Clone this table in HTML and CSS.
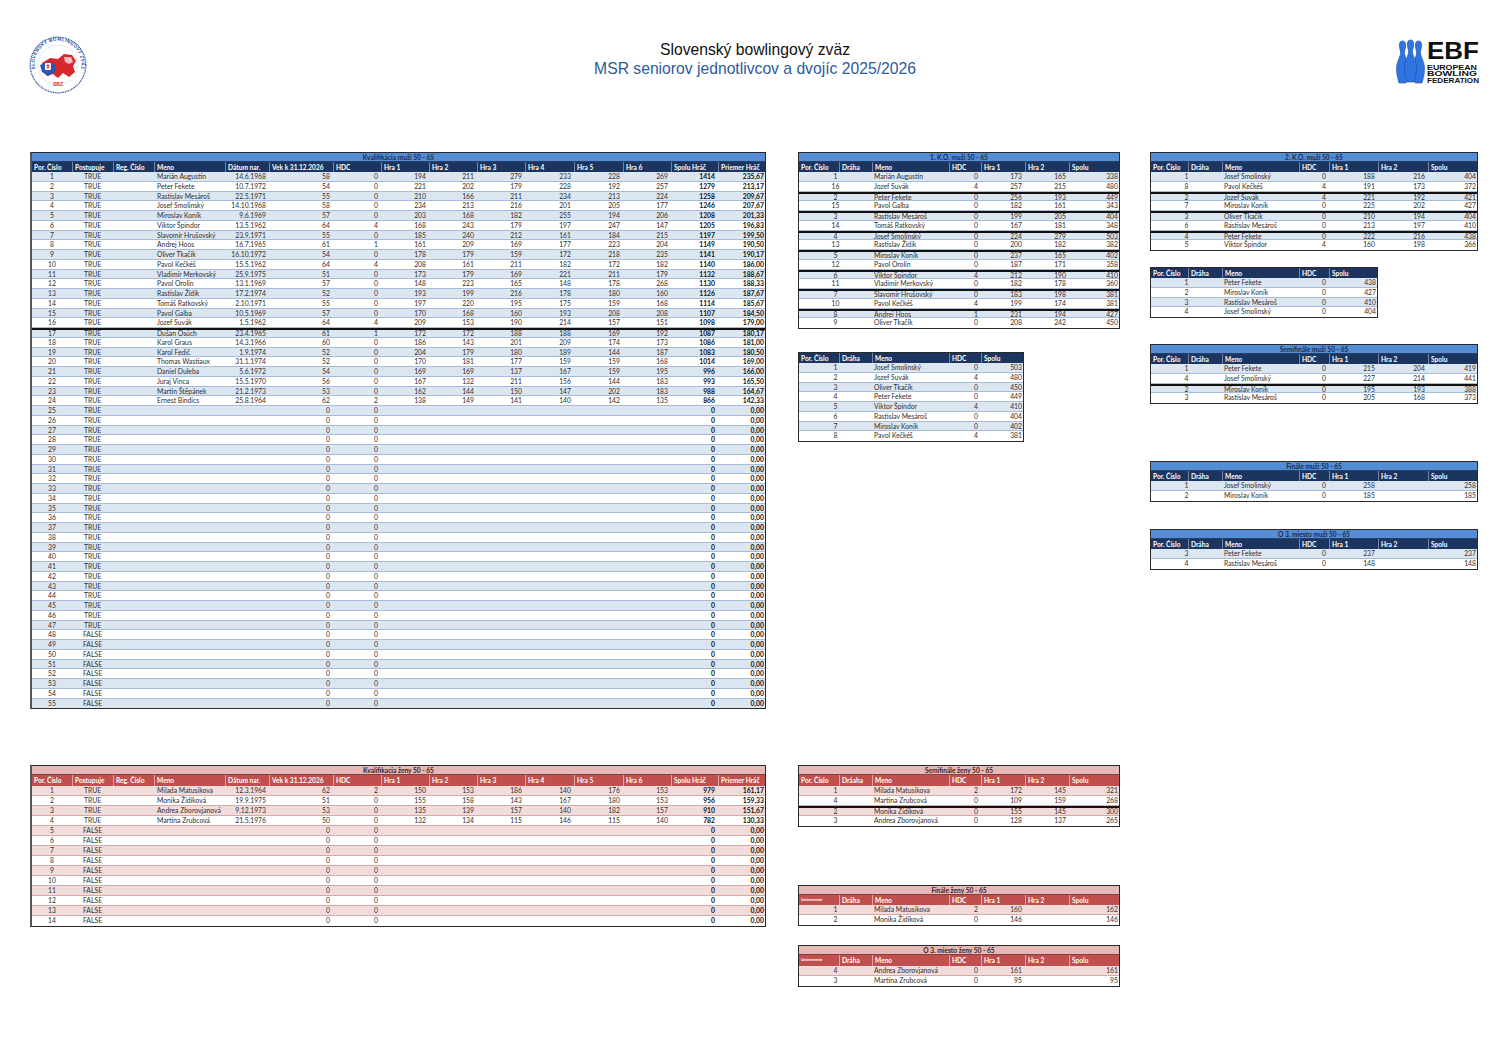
FILE: index.html
```html
<!DOCTYPE html>
<html lang="sk">
<head>
<meta charset="utf-8">
<title>MSR seniorov jednotlivcov a dvojíc 2025/2026</title>
<link rel="stylesheet" href="styles.css">
</head>
<body>
<div class="page">
  <header class="top">
    <svg class="logo-sbz" viewBox="0 0 58 58" width="58" height="58">
      <defs><path id="arc" d="M 6 33 A 23.5 23.5 0 1 1 52 33"/></defs>
      <circle cx="29" cy="29" r="27.8" fill="#fff" stroke="#2d4a9b" stroke-width="1.3" stroke-dasharray="1 0.7"/>
      <circle cx="29" cy="29" r="20" fill="none" stroke="#c9d2ea" stroke-width="0.5"/>
      <text class="arc-text"><textPath href="#arc" startOffset="50%" text-anchor="middle">SLOVENSKÝ BOWLINGOVÝ ZVÄZ</textPath></text>
      <path d="M13 27 L21 22 L29 23 L35 18 L43 19 L47 25 L44 30 L46 36 L40 41 L34 37 L29 42 L24 38 L18 40 L14 35 Z" fill="#d8282e"/>
      <path d="M11 29 L20 26 L27 29 L26 36 L19 40 L13 36 Z" fill="#2a58b0"/>
      <path d="M35 21 L42 21 L44 26 L40 28 L36 26 Z" fill="#fff" opacity=".7"/>
      <rect x="16" y="27" width="6" height="7" rx="1" fill="#fff"/>
      <path d="M19 28 V33 M17.3 29.6 H20.7 M17.8 31.2 H20.2" stroke="#d8282e" stroke-width="0.9"/>
      <text x="29" y="50" class="sbz-red" text-anchor="middle">SBZ</text>
    </svg>
    <div class="titles">
      <div class="t1">Slovenský bowlingový zväz</div>
      <div class="t2">MSR seniorov jednotlivcov a dvojíc 2025/2026</div>
    </div>
    <svg class="logo-ebf" viewBox="0 0 84 45" width="84" height="45">
      <g fill="#2f74e0" stroke="#1b4fa0" stroke-width="0.6">
        <path transform="translate(6.5 2)" d="M0,0 C3,0 3.5,3 3,6 C2.6,8.5 2,10 2,12 C2,16 6,20 6,28 C6,34 4.5,38 3.5,42 L-3.5,42 C-4.5,38 -6,34 -6,28 C-6,20 -2,16 -2,12 C-2,10 -2.6,8.5 -3,6 C-3.5,3 -3,0 0,0 Z"/>
        <path transform="translate(22.5 2)" d="M0,0 C3,0 3.5,3 3,6 C2.6,8.5 2,10 2,12 C2,16 6,20 6,28 C6,34 4.5,38 3.5,42 L-3.5,42 C-4.5,38 -6,34 -6,28 C-6,20 -2,16 -2,12 C-2,10 -2.6,8.5 -3,6 C-3.5,3 -3,0 0,0 Z"/>
        <path transform="translate(14.5 1)" d="M0,0 C3,0 3.5,3 3,6 C2.6,8.5 2,10 2,12 C2,16 6,20 6,28 C6,34 4.5,38 3.5,42 L-3.5,42 C-4.5,38 -6,34 -6,28 C-6,20 -2,16 -2,12 C-2,10 -2.6,8.5 -3,6 C-3.5,3 -3,0 0,0 Z"/>
      </g>
      <text x="31" y="20" class="ebf-big" textLength="52" lengthAdjust="spacingAndGlyphs">EBF</text>
      <text x="31" y="31" class="ebf-small" textLength="50" lengthAdjust="spacingAndGlyphs">EUROPEAN</text>
      <text x="31" y="37.3" class="ebf-small" textLength="50" lengthAdjust="spacingAndGlyphs">BOWLING</text>
      <text x="31" y="43.6" class="ebf-small" textLength="52" lengthAdjust="spacingAndGlyphs">FEDERATION</text>
    </svg>
  </header>

  <section class="men">
    <div class="col col-a">
      <div class="tbl q">
        <div class="cap">Kvalifikácia muži 50 - 65</div>
        <div class="hd"><span>Por. Číslo</span><span>Postupuje</span><span>Reg. Číslo</span><span>Meno</span><span>Dátum nar.</span><span>Vek k 31.12.2026</span><span>HDC</span><span>Hra 1</span><span>Hra 2</span><span>Hra 3</span><span>Hra 4</span><span>Hra 5</span><span>Hra 6</span><span>Spolu Hráč</span><span>Priemer Hráč</span></div>
        <div class="bd">
          <div class="r"><span>1</span><span>TRUE</span><span></span><span>Marián Augustín</span><span>14.6.1968</span><span>58</span><span>0</span><span>194</span><span>211</span><span>279</span><span>233</span><span>228</span><span>269</span><span>1414</span><span>235,67</span></div>
          <div class="r"><span>2</span><span>TRUE</span><span></span><span>Peter Fekete</span><span>10.7.1972</span><span>54</span><span>0</span><span>221</span><span>202</span><span>179</span><span>228</span><span>192</span><span>257</span><span>1279</span><span>213,17</span></div>
          <div class="r"><span>3</span><span>TRUE</span><span></span><span>Rastislav Mesároš</span><span>22.5.1971</span><span>55</span><span>0</span><span>210</span><span>166</span><span>211</span><span>234</span><span>213</span><span>224</span><span>1258</span><span>209,67</span></div>
          <div class="r"><span>4</span><span>TRUE</span><span></span><span>Josef Smolinský</span><span>14.10.1968</span><span>58</span><span>0</span><span>234</span><span>213</span><span>216</span><span>201</span><span>205</span><span>177</span><span>1246</span><span>207,67</span></div>
          <div class="r"><span>5</span><span>TRUE</span><span></span><span>Miroslav Koník</span><span>9.6.1969</span><span>57</span><span>0</span><span>203</span><span>168</span><span>182</span><span>255</span><span>194</span><span>206</span><span>1208</span><span>201,33</span></div>
          <div class="r"><span>6</span><span>TRUE</span><span></span><span>Viktor Špindor</span><span>13.5.1962</span><span>64</span><span>4</span><span>168</span><span>243</span><span>179</span><span>197</span><span>247</span><span>147</span><span>1205</span><span>196,83</span></div>
          <div class="r"><span>7</span><span>TRUE</span><span></span><span>Slavomír Hrušovský</span><span>23.9.1971</span><span>55</span><span>0</span><span>185</span><span>240</span><span>212</span><span>161</span><span>184</span><span>215</span><span>1197</span><span>199,50</span></div>
          <div class="r"><span>8</span><span>TRUE</span><span></span><span>Andrej Hoos</span><span>16.7.1965</span><span>61</span><span>1</span><span>161</span><span>209</span><span>169</span><span>177</span><span>223</span><span>204</span><span>1149</span><span>190,50</span></div>
          <div class="r"><span>9</span><span>TRUE</span><span></span><span>Oliver Tkačík</span><span>16.10.1972</span><span>54</span><span>0</span><span>178</span><span>179</span><span>159</span><span>172</span><span>218</span><span>235</span><span>1141</span><span>190,17</span></div>
          <div class="r"><span>10</span><span>TRUE</span><span></span><span>Pavol Kečkéš</span><span>15.5.1962</span><span>64</span><span>4</span><span>208</span><span>161</span><span>211</span><span>182</span><span>172</span><span>182</span><span>1140</span><span>186,00</span></div>
          <div class="r"><span>11</span><span>TRUE</span><span></span><span>Vladimír Merkovský</span><span>25.9.1975</span><span>51</span><span>0</span><span>173</span><span>179</span><span>169</span><span>221</span><span>211</span><span>179</span><span>1132</span><span>188,67</span></div>
          <div class="r"><span>12</span><span>TRUE</span><span></span><span>Pavol Orolín</span><span>13.1.1969</span><span>57</span><span>0</span><span>148</span><span>223</span><span>165</span><span>148</span><span>178</span><span>268</span><span>1130</span><span>188,33</span></div>
          <div class="r"><span>13</span><span>TRUE</span><span></span><span>Rastislav Žídik</span><span>17.2.1974</span><span>52</span><span>0</span><span>193</span><span>199</span><span>216</span><span>178</span><span>180</span><span>160</span><span>1126</span><span>187,67</span></div>
          <div class="r"><span>14</span><span>TRUE</span><span></span><span>Tomáš Ratkovský</span><span>2.10.1971</span><span>55</span><span>0</span><span>197</span><span>220</span><span>195</span><span>175</span><span>159</span><span>168</span><span>1114</span><span>185,67</span></div>
          <div class="r"><span>15</span><span>TRUE</span><span></span><span>Pavol Galba</span><span>10.5.1969</span><span>57</span><span>0</span><span>170</span><span>168</span><span>160</span><span>193</span><span>208</span><span>208</span><span>1107</span><span>184,50</span></div>
          <div class="r"><span>16</span><span>TRUE</span><span></span><span>Jozef Suvák</span><span>1.5.1962</span><span>64</span><span>4</span><span>209</span><span>153</span><span>190</span><span>214</span><span>157</span><span>151</span><span>1098</span><span>179,00</span></div>
          <div class="r sep"><span>17</span><span>TRUE</span><span></span><span>Dušan Osúch</span><span>23.4.1965</span><span>61</span><span>1</span><span>172</span><span>172</span><span>188</span><span>188</span><span>169</span><span>192</span><span>1087</span><span>180,17</span></div>
          <div class="r"><span>18</span><span>TRUE</span><span></span><span>Karol Graus</span><span>14.3.1966</span><span>60</span><span>0</span><span>186</span><span>143</span><span>201</span><span>209</span><span>174</span><span>173</span><span>1086</span><span>181,00</span></div>
          <div class="r"><span>19</span><span>TRUE</span><span></span><span>Karol Fedič</span><span>1.9.1974</span><span>52</span><span>0</span><span>204</span><span>179</span><span>180</span><span>189</span><span>144</span><span>187</span><span>1083</span><span>180,50</span></div>
          <div class="r"><span>20</span><span>TRUE</span><span></span><span>Thomas Wastiaux</span><span>31.1.1974</span><span>52</span><span>0</span><span>170</span><span>181</span><span>177</span><span>159</span><span>159</span><span>168</span><span>1014</span><span>169,00</span></div>
          <div class="r"><span>21</span><span>TRUE</span><span></span><span>Daniel Duleba</span><span>5.6.1972</span><span>54</span><span>0</span><span>169</span><span>169</span><span>137</span><span>167</span><span>159</span><span>195</span><span>996</span><span>166,00</span></div>
          <div class="r"><span>22</span><span>TRUE</span><span></span><span>Juraj Vinca</span><span>15.5.1970</span><span>56</span><span>0</span><span>167</span><span>132</span><span>211</span><span>156</span><span>144</span><span>183</span><span>993</span><span>165,50</span></div>
          <div class="r"><span>23</span><span>TRUE</span><span></span><span>Martin Štěpánek</span><span>21.2.1973</span><span>53</span><span>0</span><span>162</span><span>144</span><span>150</span><span>147</span><span>202</span><span>183</span><span>988</span><span>164,67</span></div>
          <div class="r"><span>24</span><span>TRUE</span><span></span><span>Ernest Bindics</span><span>25.8.1964</span><span>62</span><span>2</span><span>138</span><span>149</span><span>141</span><span>140</span><span>142</span><span>135</span><span>866</span><span>142,33</span></div>
          <div class="r"><span>25</span><span>TRUE</span><span></span><span></span><span></span><span>0</span><span>0</span><span></span><span></span><span></span><span></span><span></span><span></span><span>0</span><span>0,00</span></div>
          <div class="r"><span>26</span><span>TRUE</span><span></span><span></span><span></span><span>0</span><span>0</span><span></span><span></span><span></span><span></span><span></span><span></span><span>0</span><span>0,00</span></div>
          <div class="r"><span>27</span><span>TRUE</span><span></span><span></span><span></span><span>0</span><span>0</span><span></span><span></span><span></span><span></span><span></span><span></span><span>0</span><span>0,00</span></div>
          <div class="r"><span>28</span><span>TRUE</span><span></span><span></span><span></span><span>0</span><span>0</span><span></span><span></span><span></span><span></span><span></span><span></span><span>0</span><span>0,00</span></div>
          <div class="r"><span>29</span><span>TRUE</span><span></span><span></span><span></span><span>0</span><span>0</span><span></span><span></span><span></span><span></span><span></span><span></span><span>0</span><span>0,00</span></div>
          <div class="r"><span>30</span><span>TRUE</span><span></span><span></span><span></span><span>0</span><span>0</span><span></span><span></span><span></span><span></span><span></span><span></span><span>0</span><span>0,00</span></div>
          <div class="r"><span>31</span><span>TRUE</span><span></span><span></span><span></span><span>0</span><span>0</span><span></span><span></span><span></span><span></span><span></span><span></span><span>0</span><span>0,00</span></div>
          <div class="r"><span>32</span><span>TRUE</span><span></span><span></span><span></span><span>0</span><span>0</span><span></span><span></span><span></span><span></span><span></span><span></span><span>0</span><span>0,00</span></div>
          <div class="r"><span>33</span><span>TRUE</span><span></span><span></span><span></span><span>0</span><span>0</span><span></span><span></span><span></span><span></span><span></span><span></span><span>0</span><span>0,00</span></div>
          <div class="r"><span>34</span><span>TRUE</span><span></span><span></span><span></span><span>0</span><span>0</span><span></span><span></span><span></span><span></span><span></span><span></span><span>0</span><span>0,00</span></div>
          <div class="r"><span>35</span><span>TRUE</span><span></span><span></span><span></span><span>0</span><span>0</span><span></span><span></span><span></span><span></span><span></span><span></span><span>0</span><span>0,00</span></div>
          <div class="r"><span>36</span><span>TRUE</span><span></span><span></span><span></span><span>0</span><span>0</span><span></span><span></span><span></span><span></span><span></span><span></span><span>0</span><span>0,00</span></div>
          <div class="r"><span>37</span><span>TRUE</span><span></span><span></span><span></span><span>0</span><span>0</span><span></span><span></span><span></span><span></span><span></span><span></span><span>0</span><span>0,00</span></div>
          <div class="r"><span>38</span><span>TRUE</span><span></span><span></span><span></span><span>0</span><span>0</span><span></span><span></span><span></span><span></span><span></span><span></span><span>0</span><span>0,00</span></div>
          <div class="r"><span>39</span><span>TRUE</span><span></span><span></span><span></span><span>0</span><span>0</span><span></span><span></span><span></span><span></span><span></span><span></span><span>0</span><span>0,00</span></div>
          <div class="r"><span>40</span><span>TRUE</span><span></span><span></span><span></span><span>0</span><span>0</span><span></span><span></span><span></span><span></span><span></span><span></span><span>0</span><span>0,00</span></div>
          <div class="r"><span>41</span><span>TRUE</span><span></span><span></span><span></span><span>0</span><span>0</span><span></span><span></span><span></span><span></span><span></span><span></span><span>0</span><span>0,00</span></div>
          <div class="r"><span>42</span><span>TRUE</span><span></span><span></span><span></span><span>0</span><span>0</span><span></span><span></span><span></span><span></span><span></span><span></span><span>0</span><span>0,00</span></div>
          <div class="r"><span>43</span><span>TRUE</span><span></span><span></span><span></span><span>0</span><span>0</span><span></span><span></span><span></span><span></span><span></span><span></span><span>0</span><span>0,00</span></div>
          <div class="r"><span>44</span><span>TRUE</span><span></span><span></span><span></span><span>0</span><span>0</span><span></span><span></span><span></span><span></span><span></span><span></span><span>0</span><span>0,00</span></div>
          <div class="r"><span>45</span><span>TRUE</span><span></span><span></span><span></span><span>0</span><span>0</span><span></span><span></span><span></span><span></span><span></span><span></span><span>0</span><span>0,00</span></div>
          <div class="r"><span>46</span><span>TRUE</span><span></span><span></span><span></span><span>0</span><span>0</span><span></span><span></span><span></span><span></span><span></span><span></span><span>0</span><span>0,00</span></div>
          <div class="r"><span>47</span><span>TRUE</span><span></span><span></span><span></span><span>0</span><span>0</span><span></span><span></span><span></span><span></span><span></span><span></span><span>0</span><span>0,00</span></div>
          <div class="r"><span>48</span><span>FALSE</span><span></span><span></span><span></span><span>0</span><span>0</span><span></span><span></span><span></span><span></span><span></span><span></span><span>0</span><span>0,00</span></div>
          <div class="r"><span>49</span><span>FALSE</span><span></span><span></span><span></span><span>0</span><span>0</span><span></span><span></span><span></span><span></span><span></span><span></span><span>0</span><span>0,00</span></div>
          <div class="r"><span>50</span><span>FALSE</span><span></span><span></span><span></span><span>0</span><span>0</span><span></span><span></span><span></span><span></span><span></span><span></span><span>0</span><span>0,00</span></div>
          <div class="r"><span>51</span><span>FALSE</span><span></span><span></span><span></span><span>0</span><span>0</span><span></span><span></span><span></span><span></span><span></span><span></span><span>0</span><span>0,00</span></div>
          <div class="r"><span>52</span><span>FALSE</span><span></span><span></span><span></span><span>0</span><span>0</span><span></span><span></span><span></span><span></span><span></span><span></span><span>0</span><span>0,00</span></div>
          <div class="r"><span>53</span><span>FALSE</span><span></span><span></span><span></span><span>0</span><span>0</span><span></span><span></span><span></span><span></span><span></span><span></span><span>0</span><span>0,00</span></div>
          <div class="r"><span>54</span><span>FALSE</span><span></span><span></span><span></span><span>0</span><span>0</span><span></span><span></span><span></span><span></span><span></span><span></span><span>0</span><span>0,00</span></div>
          <div class="r"><span>55</span><span>FALSE</span><span></span><span></span><span></span><span>0</span><span>0</span><span></span><span></span><span></span><span></span><span></span><span></span><span>0</span><span>0,00</span></div>
        </div>
      </div>
    </div>

    <div class="col col-b">
      <div class="tbl ka">
        <div class="cap">1. K.O. muži 50 - 65</div>
        <div class="hd"><span>Por. Číslo</span><span>Dráha</span><span>Meno</span><span>HDC</span><span>Hra 1</span><span>Hra 2</span><span>Spolu</span></div>
        <div class="bd">
          <div class="r"><span>1</span><span>Marián Augustín</span><span>0</span><span>173</span><span>165</span><span>338</span></div>
          <div class="r"><span>16</span><span>Jozef Suvák</span><span>4</span><span>257</span><span>215</span><span>480</span></div>
          <div class="r sep"><span>2</span><span>Peter Fekete</span><span>0</span><span>256</span><span>193</span><span>449</span></div>
          <div class="r"><span>15</span><span>Pavol Galba</span><span>0</span><span>182</span><span>161</span><span>343</span></div>
          <div class="r sep"><span>3</span><span>Rastislav Mesároš</span><span>0</span><span>199</span><span>205</span><span>404</span></div>
          <div class="r"><span>14</span><span>Tomáš Ratkovský</span><span>0</span><span>167</span><span>181</span><span>348</span></div>
          <div class="r sep"><span>4</span><span>Josef Smolinský</span><span>0</span><span>224</span><span>279</span><span>503</span></div>
          <div class="r"><span>13</span><span>Rastislav Žídik</span><span>0</span><span>200</span><span>182</span><span>382</span></div>
          <div class="r sep"><span>5</span><span>Miroslav Koník</span><span>0</span><span>237</span><span>165</span><span>402</span></div>
          <div class="r"><span>12</span><span>Pavol Orolín</span><span>0</span><span>187</span><span>171</span><span>358</span></div>
          <div class="r sep"><span>6</span><span>Viktor Špindor</span><span>4</span><span>212</span><span>190</span><span>410</span></div>
          <div class="r"><span>11</span><span>Vladimír Merkovský</span><span>0</span><span>182</span><span>178</span><span>360</span></div>
          <div class="r sep"><span>7</span><span>Slavomír Hrušovský</span><span>0</span><span>183</span><span>198</span><span>381</span></div>
          <div class="r"><span>10</span><span>Pavol Kečkéš</span><span>4</span><span>199</span><span>174</span><span>381</span></div>
          <div class="r sep"><span>8</span><span>Andrej Hoos</span><span>1</span><span>231</span><span>194</span><span>427</span></div>
          <div class="r"><span>9</span><span>Oliver Tkačík</span><span>0</span><span>208</span><span>242</span><span>450</span></div>
        </div>
      </div>

      <div class="tbl sa gap-seed">
        <div class="hd"><span>Por. Číslo</span><span>Dráha</span><span>Meno</span><span>HDC</span><span>Spolu</span></div>
        <div class="bd">
          <div class="r"><span>1</span><span>Josef Smolinský</span><span>0</span><span>503</span></div>
          <div class="r"><span>2</span><span>Jozef Suvák</span><span>4</span><span>480</span></div>
          <div class="r"><span>3</span><span>Oliver Tkačík</span><span>0</span><span>450</span></div>
          <div class="r"><span>4</span><span>Peter Fekete</span><span>0</span><span>449</span></div>
          <div class="r"><span>5</span><span>Viktor Špindor</span><span>4</span><span>410</span></div>
          <div class="r"><span>6</span><span>Rastislav Mesároš</span><span>0</span><span>404</span></div>
          <div class="r"><span>7</span><span>Miroslav Koník</span><span>0</span><span>402</span></div>
          <div class="r"><span>8</span><span>Pavol Kečkéš</span><span>4</span><span>381</span></div>
        </div>
      </div>
    </div>

    <div class="col col-c">
      <div class="tbl kb">
        <div class="cap">2. K.O. muži 50 - 65</div>
        <div class="hd"><span>Por. Číslo</span><span>Dráha</span><span>Meno</span><span>HDC</span><span>Hra 1</span><span>Hra 2</span><span>Spolu</span></div>
        <div class="bd">
          <div class="r"><span>1</span><span>Josef Smolinský</span><span>0</span><span>188</span><span>216</span><span>404</span></div>
          <div class="r"><span>8</span><span>Pavol Kečkéš</span><span>4</span><span>191</span><span>173</span><span>372</span></div>
          <div class="r sep"><span>2</span><span>Jozef Suvák</span><span>4</span><span>221</span><span>192</span><span>421</span></div>
          <div class="r"><span>7</span><span>Miroslav Koník</span><span>0</span><span>225</span><span>202</span><span>427</span></div>
          <div class="r sep"><span>3</span><span>Oliver Tkačík</span><span>0</span><span>210</span><span>194</span><span>404</span></div>
          <div class="r"><span>6</span><span>Rastislav Mesároš</span><span>0</span><span>213</span><span>197</span><span>410</span></div>
          <div class="r sep"><span>4</span><span>Peter Fekete</span><span>0</span><span>222</span><span>216</span><span>438</span></div>
          <div class="r"><span>5</span><span>Viktor Špindor</span><span>4</span><span>160</span><span>198</span><span>366</span></div>
        </div>
      </div>

      <div class="tbl sb gap-stand">
        <div class="hd"><span>Por. Číslo</span><span>Dráha</span><span>Meno</span><span>HDC</span><span>Spolu</span></div>
        <div class="bd">
          <div class="r"><span>1</span><span>Peter Fekete</span><span>0</span><span>438</span></div>
          <div class="r"><span>2</span><span>Miroslav Koník</span><span>0</span><span>427</span></div>
          <div class="r"><span>3</span><span>Rastislav Mesároš</span><span>0</span><span>410</span></div>
          <div class="r"><span>4</span><span>Josef Smolinský</span><span>0</span><span>404</span></div>
        </div>
      </div>

      <div class="tbl kb gap-semi">
        <div class="cap">Semifinále muži 50 - 65</div>
        <div class="hd"><span>Por. Číslo</span><span>Dráha</span><span>Meno</span><span>HDC</span><span>Hra 1</span><span>Hra 2</span><span>Spolu</span></div>
        <div class="bd">
          <div class="r"><span>1</span><span>Peter Fekete</span><span>0</span><span>215</span><span>204</span><span>419</span></div>
          <div class="r"><span>4</span><span>Josef Smolinský</span><span>0</span><span>227</span><span>214</span><span>441</span></div>
          <div class="r sep"><span>2</span><span>Miroslav Koník</span><span>0</span><span>195</span><span>193</span><span>388</span></div>
          <div class="r"><span>3</span><span>Rastislav Mesároš</span><span>0</span><span>205</span><span>168</span><span>373</span></div>
        </div>
      </div>

      <div class="tbl kb gap-final">
        <div class="cap">Finále muži 50 - 65</div>
        <div class="hd"><span>Por. Číslo</span><span>Dráha</span><span>Meno</span><span>HDC</span><span>Hra 1</span><span>Hra 2</span><span>Spolu</span></div>
        <div class="bd">
          <div class="r"><span>1</span><span>Josef Smolinský</span><span>0</span><span>258</span><span></span><span>258</span></div>
          <div class="r"><span>2</span><span>Miroslav Koník</span><span>0</span><span>185</span><span></span><span>185</span></div>
        </div>
      </div>

      <div class="tbl kb gap-third">
        <div class="cap">O 3. miesto muži 50 - 65</div>
        <div class="hd"><span>Por. Číslo</span><span>Dráha</span><span>Meno</span><span>HDC</span><span>Hra 1</span><span>Hra 2</span><span>Spolu</span></div>
        <div class="bd">
          <div class="r"><span>3</span><span>Peter Fekete</span><span>0</span><span>237</span><span></span><span>237</span></div>
          <div class="r"><span>4</span><span>Rastislav Mesároš</span><span>0</span><span>148</span><span></span><span>148</span></div>
        </div>
      </div>
    </div>
  </section>

  <section class="women">
    <div class="col col-a">
      <div class="tbl q red">
        <div class="cap">Kvalifikacia ženy 50 - 65</div>
        <div class="hd"><span>Por. Číslo</span><span>Postupuje</span><span>Reg. Číslo</span><span>Meno</span><span>Dátum nar.</span><span>Vek k 31.12.2026</span><span>HDC</span><span>Hra 1</span><span>Hra 2</span><span>Hra 3</span><span>Hra 4</span><span>Hra 5</span><span>Hra 6</span><span>Spolu Hráč</span><span>Priemer Hráč</span></div>
        <div class="bd">
          <div class="r"><span>1</span><span>TRUE</span><span></span><span>Milada Matusikova</span><span>12.3.1964</span><span>62</span><span>2</span><span>150</span><span>153</span><span>186</span><span>140</span><span>176</span><span>153</span><span>979</span><span>161,17</span></div>
          <div class="r"><span>2</span><span>TRUE</span><span></span><span>Monika Židíková</span><span>19.9.1975</span><span>51</span><span>0</span><span>155</span><span>158</span><span>143</span><span>167</span><span>180</span><span>153</span><span>956</span><span>159,33</span></div>
          <div class="r"><span>3</span><span>TRUE</span><span></span><span>Andrea Zborovjanová</span><span>9.12.1973</span><span>53</span><span>0</span><span>135</span><span>139</span><span>157</span><span>140</span><span>182</span><span>157</span><span>910</span><span>151,67</span></div>
          <div class="r"><span>4</span><span>TRUE</span><span></span><span>Martina Zrubcová</span><span>21.5.1976</span><span>50</span><span>0</span><span>132</span><span>134</span><span>115</span><span>146</span><span>115</span><span>140</span><span>782</span><span>130,33</span></div>
          <div class="r"><span>5</span><span>FALSE</span><span></span><span></span><span></span><span>0</span><span>0</span><span></span><span></span><span></span><span></span><span></span><span></span><span>0</span><span>0,00</span></div>
          <div class="r"><span>6</span><span>FALSE</span><span></span><span></span><span></span><span>0</span><span>0</span><span></span><span></span><span></span><span></span><span></span><span></span><span>0</span><span>0,00</span></div>
          <div class="r"><span>7</span><span>FALSE</span><span></span><span></span><span></span><span>0</span><span>0</span><span></span><span></span><span></span><span></span><span></span><span></span><span>0</span><span>0,00</span></div>
          <div class="r"><span>8</span><span>FALSE</span><span></span><span></span><span></span><span>0</span><span>0</span><span></span><span></span><span></span><span></span><span></span><span></span><span>0</span><span>0,00</span></div>
          <div class="r"><span>9</span><span>FALSE</span><span></span><span></span><span></span><span>0</span><span>0</span><span></span><span></span><span></span><span></span><span></span><span></span><span>0</span><span>0,00</span></div>
          <div class="r"><span>10</span><span>FALSE</span><span></span><span></span><span></span><span>0</span><span>0</span><span></span><span></span><span></span><span></span><span></span><span></span><span>0</span><span>0,00</span></div>
          <div class="r"><span>11</span><span>FALSE</span><span></span><span></span><span></span><span>0</span><span>0</span><span></span><span></span><span></span><span></span><span></span><span></span><span>0</span><span>0,00</span></div>
          <div class="r"><span>12</span><span>FALSE</span><span></span><span></span><span></span><span>0</span><span>0</span><span></span><span></span><span></span><span></span><span></span><span></span><span>0</span><span>0,00</span></div>
          <div class="r"><span>13</span><span>FALSE</span><span></span><span></span><span></span><span>0</span><span>0</span><span></span><span></span><span></span><span></span><span></span><span></span><span>0</span><span>0,00</span></div>
          <div class="r"><span>14</span><span>FALSE</span><span></span><span></span><span></span><span>0</span><span>0</span><span></span><span></span><span></span><span></span><span></span><span></span><span>0</span><span>0,00</span></div>
        </div>
      </div>
    </div>

    <div class="col col-b">
      <div class="tbl ka red">
        <div class="cap">Semifinále ženy 50 - 65</div>
        <div class="hd"><span>Por. Číslo</span><span>Dráaha</span><span>Meno</span><span>HDC</span><span>Hra 1</span><span>Hra 2</span><span>Spolu</span></div>
        <div class="bd">
          <div class="r"><span>1</span><span>Milada Matusikova</span><span>2</span><span>172</span><span>145</span><span>321</span></div>
          <div class="r"><span>4</span><span>Martina Zrubcová</span><span>0</span><span>109</span><span>159</span><span>268</span></div>
          <div class="r sep"><span>2</span><span>Monika Židíková</span><span>0</span><span>155</span><span>145</span><span>300</span></div>
          <div class="r"><span>3</span><span>Andrea Zborovjanová</span><span>0</span><span>128</span><span>137</span><span>265</span></div>
        </div>
      </div>

      <div class="tbl ka red gap-wfinal">
        <div class="cap">Finále ženy 50 - 65</div>
        <div class="hd"><span class="tiny">Umiestnenie</span><span>Dráha</span><span>Meno</span><span>HDC</span><span>Hra 1</span><span>Hra 2</span><span>Spolu</span></div>
        <div class="bd">
          <div class="r"><span>1</span><span>Milada Matusikova</span><span>2</span><span>160</span><span></span><span>162</span></div>
          <div class="r"><span>2</span><span>Monika Židíková</span><span>0</span><span>146</span><span></span><span>146</span></div>
        </div>
      </div>

      <div class="tbl ka red gap-wthird">
        <div class="cap">O 3. miesto ženy 50 - 65</div>
        <div class="hd"><span class="tiny">Umiestnenie</span><span>Dráha</span><span>Meno</span><span>HDC</span><span>Hra 1</span><span>Hra 2</span><span>Spolu</span></div>
        <div class="bd">
          <div class="r"><span>4</span><span>Andrea Zborovjanová</span><span>0</span><span>161</span><span></span><span>161</span></div>
          <div class="r"><span>3</span><span>Martina Zrubcová</span><span>0</span><span>95</span><span></span><span>95</span></div>
        </div>
      </div>
    </div>
  </section>
</div>
</body>
</html>
```

FILE: styles.css
```css
* { box-sizing: border-box; margin: 0; padding: 0; }

html, body { background: #fff; }

body {
  width: 1497px;
  height: 1058px;
  overflow: hidden;
  font-family: Lato, "Open Sans", "Liberation Sans", sans-serif;
  color: #333;
}

.page {
  padding: 36px 17px 0 30px;
}

/* ---------- header ---------- */
.top {
  display: grid;
  grid-template-columns: 1fr auto 1fr;
  align-items: start;
  height: 116px;
}

.logo-sbz { margin-left: -1px; display: block; }

.arc-text {
  font-family: "Liberation Sans", Arial, sans-serif;
  font-size: 4.6px;
  font-weight: 700;
  fill: #2d4a9b;
  letter-spacing: 0.35px;
}

.sbz-red {
  font-family: "Liberation Sans", Arial, sans-serif;
  font-size: 5px;
  font-weight: 700;
  fill: #d8282e;
}

.titles {
  padding-top: 3.5px;
  text-align: center;
  font-family: "Liberation Sans", Arial, sans-serif;
  font-size: 15.7px;
  line-height: 19px;
}
.titles .t1 { color: #111; }
.titles .t2 { color: #2e5a9c; }

.logo-ebf { justify-self: end; margin-top: 3px; display: block; }

.ebf-big {
  font-family: "Liberation Sans", Arial, sans-serif;
  font-weight: 700;
  font-size: 23px;
  fill: #111;
}
.ebf-small {
  font-family: "Liberation Sans", Arial, sans-serif;
  font-weight: 700;
  font-size: 6.6px;
  fill: #111;
}

/* ---------- sections ---------- */
.men, .women {
  display: flex;
  align-items: flex-start;
}
.women { margin-top: 55.75px; }

.col-a { width: 736px; margin-right: 32px; }
.col-b { width: 322px; margin-right: 30px; }
.col-c { width: 328px; }

.gap-seed  { margin-top: 23px; width: 226px; }
.gap-stand { margin-top: 16px; width: 228px; }
.gap-semi  { margin-top: 26px; }
.gap-final { margin-top: 57px; }
.gap-third { margin-top: 27.5px; }
.gap-wfinal { margin-top: 58px; }
.gap-wthird { margin-top: 19px; }

/* ---------- spreadsheet tables ---------- */
.tbl {
  border: 1px solid #2a2a2a;
  background: #fff;
}
.tbl.q { border-left: 2px solid #555; }

.cap {
  height: 9px;
  line-height: 9px;
  background: #538dd5;
  color: #1b2a4a;
  text-align: center;
  font-size: 6.6px;
  font-weight: 700;
  border-bottom: 1px solid #2a3f66;
}

.hd, .r { display: grid; }

.hd {
  height: 10px;
  background: #1b3560;
  color: #fff;
  font-size: 6.6px;
  font-weight: 700;
  line-height: 10px;
}
.hd span {
  padding-left: 2px;
  white-space: nowrap;
  overflow: hidden;
}
.hd span + span { border-left: 1px solid #6f86ad; }
.hd .tiny { font-size: 3.8px; }

.r {
  height: 9.75px;
  border-bottom: 1px solid #a6bcda;
  font-size: 6.8px;
  line-height: 8.6px;
  color: #2f2f2f;
}
.bd .r:nth-child(odd) { background: #dce6f1; }
.bd .r:last-child { border-bottom: 0; }
.r.sep { border-top: 2px solid #111; line-height: 6.6px; }

.r span {
  white-space: nowrap;
  overflow: hidden;
  text-align: right;
  padding: 0 3px;
}

/* qualification table */
.q .hd, .q .r {
  grid-template-columns: 40px 41px 41px 71px 44px 64px 48px 48px 48px 48px 49px 49px 48px 47px 1fr;
}
.q .r span:nth-child(1),
.q .r span:nth-child(2) { text-align: center; }
.q .r span:nth-child(3),
.q .r span:nth-child(4) { text-align: left; }
.q .r span:nth-child(14),
.q .r span:nth-child(15) { font-weight: 700; color: #111; }
.q .r span:nth-child(15) { padding-right: 1px; }

/* knock-out tables */
.ka .hd, .ka .r { grid-template-columns: 40px 33px 77px 32px 44px 44px 1fr; }
.sa .hd, .sa .r { grid-template-columns: 40px 33px 77px 32px 1fr; }
.kb .hd, .kb .r { grid-template-columns: 37px 34px 77px 30px 49px 50px 1fr; }
.sb .hd, .sb .r { grid-template-columns: 37px 34px 77px 30px 1fr; }

.ka .r span:first-child,
.sa .r span:first-child,
.kb .r span:first-child,
.sb .r span:first-child {
  grid-column: span 2;
  text-align: center;
}
.ka .r span:nth-child(2),
.sa .r span:nth-child(2),
.kb .r span:nth-child(2),
.sb .r span:nth-child(2) { text-align: left; padding-left: 2px; }
.ka .r span:last-child,
.sa .r span:last-child,
.kb .r span:last-child,
.sb .r span:last-child { padding-right: 1px; }

/* women (red) variant */
.red .cap {
  background: #e6b8b7;
  color: #3a1c1c;
  border-bottom-color: #8a3b3a;
}
.red .hd { background: #c0504d; }
.red .hd span + span { border-left-color: #e3a3a1; }
.red .r {
  height: 10px;
  border-bottom-color: #d9a9a8;
  line-height: 9px;
}
.red .r.sep { line-height: 7px; }
.red .bd .r:nth-child(odd) { background: #f2dcdb; }
.red .hd { height: 10.5px; line-height: 10.5px; }
```
